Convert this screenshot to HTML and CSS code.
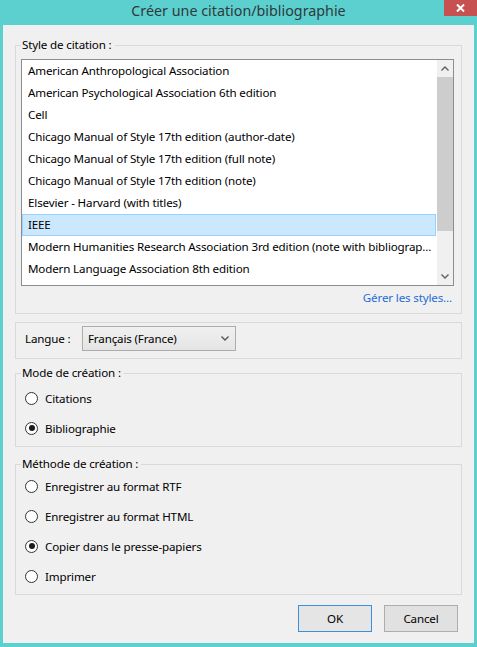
FILE: index.html
```html
<!DOCTYPE html>
<html lang="fr">
<head>
<meta charset="utf-8">
<title>Créer une citation/bibliographie</title>
<link rel="stylesheet" href="styles.css">
</head>
<body>
<div class="window">
  <div class="titlebar">
    <span class="title">Créer une citation/bibliographie</span>
    <span class="close"><svg width="9" height="8" viewBox="0 0 9 8"><path d="M1 0.5 L8 7.5 M8 0.5 L1 7.5" stroke="#fff" stroke-width="2" fill="none"/></svg></span>
  </div>
  <div class="client">
    <section class="group g-style">
      <span class="caption">Style de citation :</span>
      <div class="listbox">
        <ul class="items">
          <li>American Anthropological Association</li>
          <li>American Psychological Association 6th edition</li>
          <li>Cell</li>
          <li>Chicago Manual of Style 17th edition (author-date)</li>
          <li>Chicago Manual of Style 17th edition (full note)</li>
          <li>Chicago Manual of Style 17th edition (note)</li>
          <li>Elsevier - Harvard (with titles)</li>
          <li class="selected">IEEE</li>
          <li>Modern Humanities Research Association 3rd edition (note with bibliograp...</li>
          <li>Modern Language Association 8th edition</li>
        </ul>
        <div class="vscroll">
          <span class="arrow"><svg width="8" height="5" viewBox="0 0 8 5"><path d="M0.5 4.5 L4 1 L7.5 4.5" stroke="#606060" stroke-width="1.4" fill="none"/></svg></span>
          <div class="track"><div class="thumb"></div></div>
          <span class="arrow"><svg width="8" height="5" viewBox="0 0 8 5"><path d="M0.5 0.5 L4 4 L7.5 0.5" stroke="#606060" stroke-width="1.4" fill="none"/></svg></span>
        </div>
      </div>
      <div class="manage"><a class="link">Gérer les styles...</a></div>
    </section>

    <section class="group g-lang">
      <span class="lang-label">Langue :</span>
      <div class="select">
        <span>Français (France)</span>
        <svg width="8" height="5" viewBox="0 0 8 5"><path d="M0.5 0.5 L4 4 L7.5 0.5" stroke="#555" stroke-width="1.4" fill="none"/></svg>
      </div>
    </section>

    <section class="group g-mode">
      <span class="caption">Mode de création :</span>
      <div class="radios">
        <div class="radio"><span class="dot"></span><span>Citations</span></div>
        <div class="radio"><span class="dot checked"></span><span>Bibliographie</span></div>
      </div>
    </section>

    <section class="group g-method">
      <span class="caption">Méthode de création :</span>
      <div class="radios">
        <div class="radio"><span class="dot"></span><span>Enregistrer au format RTF</span></div>
        <div class="radio"><span class="dot"></span><span>Enregistrer au format HTML</span></div>
        <div class="radio"><span class="dot checked"></span><span>Copier dans le presse-papiers</span></div>
        <div class="radio"><span class="dot"></span><span>Imprimer</span></div>
      </div>
    </section>

    <div class="buttons">
      <span class="btn default">OK</span>
      <span class="btn">Cancel</span>
    </div>
  </div>
</div>
</body>
</html>
```

FILE: styles.css
```css
html, body {
  margin: 0;
  padding: 0;
}
body {
  font-family: "Noto Sans", "Open Sans", sans-serif;
  font-size: 11.6px;
  letter-spacing: -0.15px;
  color: #000;
}
.window {
  width: 477px;
  height: 647px;
  box-sizing: border-box;
  background: #5ccfcf;
  padding: 0 3px 4px;
  display: flex;
  flex-direction: column;
}
.titlebar {
  height: 25px;
  margin: 0 -3px;
  display: grid;
}
.title, .close {
  grid-area: 1 / 1;
}
.title {
  justify-self: center;
  font-size: 14.3px;
  letter-spacing: 0;
  line-height: 22px;
  color: #2f3a3b;
}
.close {
  justify-self: end;
  align-self: start;
  width: 33px;
  height: 16px;
  background: #c75050;
  display: flex;
  align-items: center;
  justify-content: center;
}
.client {
  flex: 1;
  background: #f0f0f0;
  padding: 0 12px;
  display: flex;
  flex-direction: column;
}
.group {
  border: 1px solid #d9d9d9;
  padding: 0 7px 0 5px;
  display: flex;
  flex-direction: column;
}
.caption {
  align-self: flex-start;
  margin-top: -9px;
  height: 16px;
  line-height: 16px;
  padding: 0 3px 0 1px;
  background: #f0f0f0;
}
.g-style {
  margin-top: 20px;
  padding-bottom: 7px;
}
.listbox {
  margin-top: 6px;
  height: 227px;
  box-sizing: border-box;
  border: 1px solid #8a8d92;
  background: #fff;
  display: flex;
}
.items {
  list-style: none;
  margin: 0;
  padding: 0 1px 0 0;
  flex: 1;
  min-width: 0;
}
.items li {
  height: 22px;
  line-height: 22px;
  padding-left: 6px;
  white-space: nowrap;
  overflow: hidden;
  box-sizing: border-box;
}
.items li.selected {
  background: #cce8ff;
  border: 1px solid #99d1ff;
  line-height: 20px;
  padding-left: 5px;
}
.vscroll {
  width: 16px;
  background: #f0f0f0;
  display: flex;
  flex-direction: column;
}
.arrow {
  height: 17px;
  display: flex;
  align-items: center;
  justify-content: center;
}
.track {
  flex: 1;
}
.thumb {
  height: 154px;
  background: #cdcdcd;
}
.manage {
  margin-top: 4px;
  line-height: 16px;
  text-align: right;
  padding-right: 2px;
}
.link {
  color: #1f6cd6;
}
.g-lang {
  margin-top: 8px;
  padding: 3px 7px 7px 9px;
  flex-direction: row;
  align-items: center;
}
.lang-label {
  width: 57px;
}
.select {
  width: 154px;
  height: 25px;
  box-sizing: border-box;
  border: 1px solid #acacac;
  background: linear-gradient(#f0f0f0, #e5e5e5);
  display: flex;
  align-items: center;
  justify-content: space-between;
  padding: 0 6px 0 5px;
}
.g-mode {
  margin-top: 14px;
  padding-bottom: 3px;
}
.g-mode .radios {
  margin-top: 2px;
}
.g-method {
  margin-top: 17px;
  padding-bottom: 3px;
}
.g-method .radios {
  margin-top: -1px;
}
.radio {
  height: 30px;
  display: flex;
  align-items: center;
  padding-left: 4px;
}
.dot {
  width: 13px;
  height: 13px;
  box-sizing: border-box;
  border: 1px solid #333;
  border-radius: 50%;
  background: #fff;
  margin-right: 7px;
  display: flex;
  align-items: center;
  justify-content: center;
}
.dot.checked::after {
  content: "";
  width: 6px;
  height: 6px;
  border-radius: 50%;
  background: #1a1a1a;
}
.buttons {
  margin-top: 10px;
  margin-right: 4px;
  display: flex;
  justify-content: flex-end;
  gap: 12px;
}
.btn {
  width: 74px;
  height: 27px;
  box-sizing: border-box;
  border: 1px solid #adadad;
  background: #e1e1e1;
  display: flex;
  align-items: center;
  justify-content: center;
}
.btn.default {
  border-color: #3c8fdc;
  background: #e5e5e5;
}
```
